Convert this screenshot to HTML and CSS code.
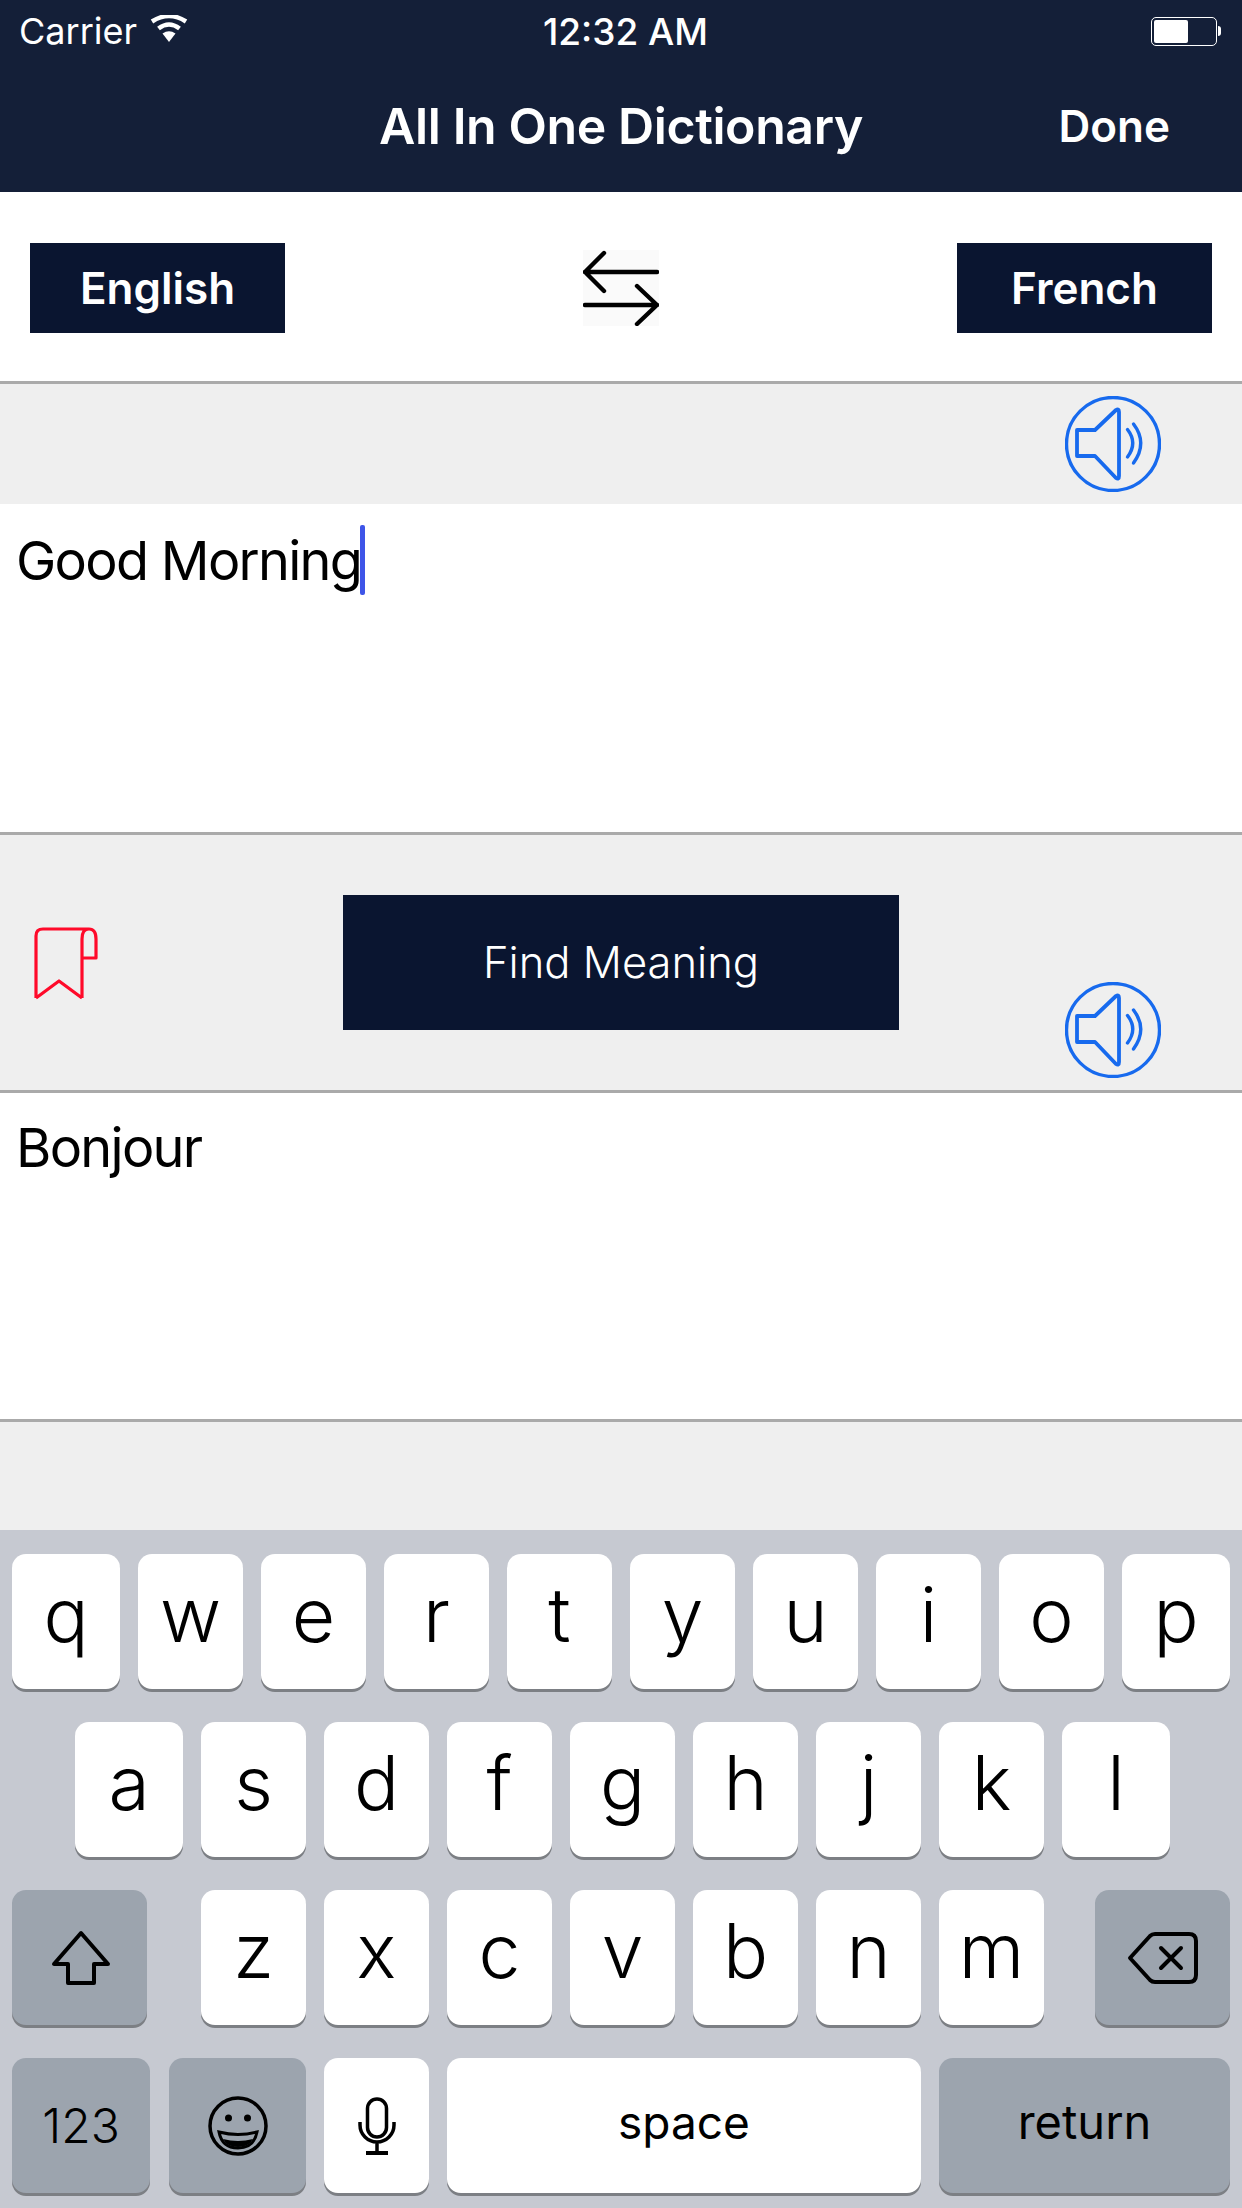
FILE: index.html
```html
<!DOCTYPE html>
<html lang="en">
<head>
<meta charset="utf-8">
<title>All In One Dictionary</title>
<link rel="stylesheet" href="styles.css">
</head>
<body>
<div class="screen">
  <header class="header">
    <div class="status">
      <div class="status-left">
        <span class="carrier">Carrier</span>
        <svg class="wifi" width="40" height="28" viewBox="0 0 40 28"><path d="M20 27L13.5 18.5Q20 14 26.500 18.500Z" fill="#fff"/><path d="M9.500 13.500Q20 5.500 30.500 13.500" fill="none" stroke="#fff" stroke-width="4.500"/><path d="M3 6.500Q20 -4.500 37 6.500" fill="none" stroke="#fff" stroke-width="4.500"/></svg>
      </div>
      <span class="clock">12:32 AM</span>
      <div class="battery"><div class="battery-body"><div class="battery-fill"></div></div><div class="battery-nub"></div></div>
    </div>
    <div class="nav">
      <h1 class="title">All In One Dictionary</h1>
      <span class="done">Done</span>
    </div>
  </header>

  <section class="lang-row">
    <button class="lang-btn">English</button>
    <svg class="swap" width="76" height="76" viewBox="0 0 76 76"><rect width="76" height="76" fill="#fafafa"/><path d="M2 22H74M21 3L2 22L21 41M2 55H74M54 36L74 55L54 74" fill="none" stroke="#000" stroke-width="4.400" stroke-linecap="round" stroke-linejoin="round"/></svg>
    <button class="lang-btn">French</button>
  </section>

  <div class="bar bar-top">
    <svg class="speaker" width="96" height="96" viewBox="0 0 96 96"><circle cx="48" cy="48" r="46.500" fill="none" stroke="#176aee" stroke-width="3.400"/><path d="M12 34H30L51 14Q54 12 54 16V80Q54 84 51 82L30 60H12Z" fill="none" stroke="#176aee" stroke-width="3.800" stroke-linejoin="round"/><path d="M62.500 33.500Q73 47 62.500 61M68.500 28Q83 47 68.500 67" fill="none" stroke="#176aee" stroke-width="3.400" stroke-linecap="round"/></svg>
  </div>
  <div class="text-area"><span class="text">Good Morning</span><span class="cursor"></span></div>

  <div class="bar bar-mid">
    <svg class="bookmark" width="66" height="74" viewBox="0 0 66 74"><path d="M3 71V9Q3 2 10 2H56Q63 2 63 12V31H49M49 71V12Q49 2 56 2M3 71L26 54L49 71" fill="none" stroke="#ff0a2a" stroke-width="3.200" stroke-linejoin="round"/></svg>
    <button class="find-btn">Find Meaning</button>
    <svg class="speaker speaker-low" width="96" height="96" viewBox="0 0 96 96"><circle cx="48" cy="48" r="46.500" fill="none" stroke="#176aee" stroke-width="3.400"/><path d="M12 34H30L51 14Q54 12 54 16V80Q54 84 51 82L30 60H12Z" fill="none" stroke="#176aee" stroke-width="3.800" stroke-linejoin="round"/><path d="M62.500 33.500Q73 47 62.500 61M68.500 28Q83 47 68.500 67" fill="none" stroke="#176aee" stroke-width="3.400" stroke-linecap="round"/></svg>
  </div>
  <div class="text-area text-area-result"><span class="text">Bonjour</span></div>
  <div class="bar bar-bottom"></div>

  <section class="keyboard">
    <div class="row row-1">
      <div class="key edge">q</div><div class="key">w</div><div class="key">e</div><div class="key">r</div><div class="key">t</div><div class="key">y</div><div class="key">u</div><div class="key">i</div><div class="key">o</div><div class="key edge">p</div>
    </div>
    <div class="row row-2">
      <div class="key edge">a</div><div class="key">s</div><div class="key">d</div><div class="key">f</div><div class="key">g</div><div class="key">h</div><div class="key">j</div><div class="key">k</div><div class="key edge">l</div>
    </div>
    <div class="row row-3">
      <div class="key special wide">
        <svg width="62" height="58" viewBox="0 0 62 58"><path d="M32 4L5 35H19V54H45V35H59Z" fill="none" stroke="#000" stroke-width="4" stroke-linejoin="round"/></svg>
      </div>
      <div class="letters">
        <div class="key">z</div><div class="key">x</div><div class="key">c</div><div class="key">v</div><div class="key">b</div><div class="key">n</div><div class="key">m</div>
      </div>
      <div class="key special wide delete">
        <svg width="74" height="58" viewBox="0 0 74 58"><path d="M4 29L24 7Q26 5 29 5H63Q70 5 70 12V46Q70 53 63 53H29Q26 53 24 51Z" fill="none" stroke="#000" stroke-width="4" stroke-linejoin="round"/><path d="M35 19L55 39M55 19L35 39" fill="none" stroke="#000" stroke-width="4" stroke-linecap="round"/></svg>
      </div>
    </div>
    <div class="row row-4">
      <div class="key special num">123</div>
      <div class="key special emoji">
        <svg width="64" height="64" viewBox="0 0 64 64"><circle cx="32" cy="32" r="28" fill="none" stroke="#000" stroke-width="3.500"/><circle cx="22.500" cy="24" r="3.500"/><circle cx="41.500" cy="24" r="3.500"/><path d="M13 38Q32 43 51 38Q48 54 32 54Q16 54 13 38Z" fill="none" stroke="#000" stroke-width="3"/><path d="M17 45Q32 49 47 45Q43 53 32 53Q21 53 17 45Z"/></svg>
      </div>
      <div class="key">
        <svg width="40" height="60" viewBox="0 0 40 60"><rect x="10.500" y="3" width="19" height="38" rx="9.500" fill="none" stroke="#000" stroke-width="3.500"/><path d="M3 26V29A17 17 0 0 0 37 29V26M20 46V56" fill="none" stroke="#000" stroke-width="3.500"/><path d="M9 57H31" fill="none" stroke="#000" stroke-width="4"/></svg>
      </div>
      <div class="key space">space</div>
      <div class="key special return">return</div>
    </div>
  </section>
</div>
</body>
</html>
```
FILE: styles.css
```css
* { box-sizing: border-box; }
html, body { margin: 0; padding: 0; }
body { width: 1242px; height: 2208px; overflow: hidden; background: #fff; font-family: "Inter", "Liberation Sans", sans-serif; color: #000; }
.screen { width: 1242px; height: 2208px; display: flex; flex-direction: column; }

.header { height: 192px; background: #141f38; color: #fff; display: flex; flex-direction: column; }
.status { height: 62px; padding: 0 20px 0 19px; display: grid; grid-template-columns: 1fr auto 1fr; align-items: center; font-size: 36px; }
.status-left { display: flex; align-items: center; gap: 12px; }
.wifi { margin-top: -4px; }
.carrier { font-weight: 400; }
.clock { font-weight: 500; font-size: 37px; margin-left: 10px; }
.battery { justify-self: end; display: flex; align-items: center; margin-right: 1px; }
.battery-body { width: 66px; height: 29px; border: 1.500px solid #fff; border-radius: 5px; padding: 2px; }
.battery-fill { width: 34px; height: 100%; background: #fff; border-radius: 2px; }
.battery-nub { width: 3px; height: 10px; background: #fff; border-radius: 0 3px 3px 0; margin-left: 1px; }
.nav { flex: 1; display: grid; grid-template-columns: 1fr auto 1fr; align-items: center; padding: 0 72px 0 0; margin-top: -2px; }
.title { grid-column: 2; margin: 0; font-size: 50px; font-weight: 600; letter-spacing: -0.4px; transform: translateX(36px); }
.done { grid-column: 3; justify-self: end; font-size: 44px; font-weight: 600; }

.lang-row { height: 189px; padding: 3px 30px 0; display: flex; align-items: center; justify-content: space-between; }
.lang-btn { width: 255px; height: 90px; border: 0; padding: 0; background: #0a1530; color: #fff; font: 600 44px "Inter", sans-serif; }
.swap { display: block; margin-right: 1px; }

.bar { background: #efefef; border-top: 3px solid #aaa; }
.bar-top { height: 123px; display: flex; justify-content: flex-end; padding: 12px 81px 0 0; }
.speaker { display: block; }

.text-area { height: 328px; padding: 22px 16px 0; display: flex; align-items: flex-start; }
.text-area-result { height: 326px; padding-top: 20px; }
.text { font-size: 54px; line-height: 70px; letter-spacing: -1.7px; }
.cursor { width: 5px; height: 70px; margin: -1px 0 0 -1px; background: #3e55e8; border-radius: 2px; }

.bar-mid { height: 261px; border-bottom: 3px solid #aaa; display: grid; grid-template-columns: 343px 556px 1fr; }
.bookmark { display: block; margin: 92px 0 0 33px; }
.find-btn { width: 556px; height: 135px; margin-top: 60px; border: 0; padding: 0 0 2px; background: #0a1530; color: #fff; font: 300 43.500px "Inter", sans-serif; }
.speaker-low { justify-self: end; margin: 147px 81px 0 0; }

.bar-bottom { height: 111px; }

.keyboard { flex: 1; background: #c6c9d1; padding-top: 24px; display: flex; flex-direction: column; gap: 33px; }
.row { height: 135px; display: flex; gap: 18px; padding: 0 12px; }
.row-2 { padding-left: 75px; }
.letters { display: flex; gap: 18px; margin-left: 36px; }
.delete { margin-left: auto; }
.key { width: 105px; height: 135px; background: #fff; border-radius: 14px; box-shadow: 0 3px 0 #7c7f84; display: flex; align-items: center; justify-content: center; font: 350 75px "Inter", sans-serif; padding-bottom: 14px; }
.edge { width: 108px; }
.special { background: #9ca4ae; }
.wide { width: 135px; padding-bottom: 0; }
.row-4 .key { padding-bottom: 0; }
.row-4 .num { width: 138px; font-size: 48px; }
.row-4 .emoji { width: 137px; margin-left: 1px; }
.row-4 .space { width: 474px; font-size: 46px; padding-bottom: 8px; font-weight: 400; }
.row-4 .return { width: 291px; font-size: 47px; padding-bottom: 8px; font-weight: 400; }
```
